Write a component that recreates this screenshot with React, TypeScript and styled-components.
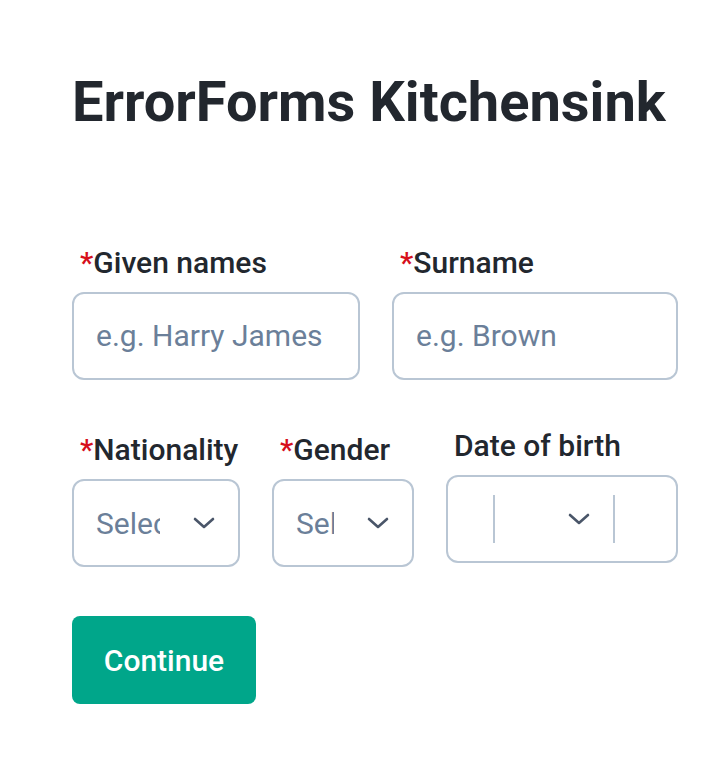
import * as React from 'react';
import styled, { createGlobalStyle } from 'styled-components';

const GlobalStyle = createGlobalStyle`
    body {
        margin: 0;
        background: #ffffff;
        font-family: Roboto, "Liberation Sans", Arial, sans-serif;
    }
`;

const Page = styled.div`
    padding: 69px 40px 40px 72px;
`;

const Title = styled.h1`
    margin: 0 0 107px 0;
    font-size: 56px;
    line-height: 67px;
    font-weight: 700;
    color: #22272e;
`;

const Form = styled.form`
    display: flex;
    flex-direction: column;
    gap: 50px;
    width: 606px;
`;

const Row = styled.div`
    display: flex;
    align-items: flex-start;
    gap: 32px;
`;

const Field: any = styled.div`
    display: flex;
    flex-direction: column;
    width: ${(props: any) => props.width}px;
`;

const Label: any = styled.label`
    display: block;
    padding: ${(props: any) => props.required ? '4px' : '0'} 0 0 8px;
    margin-bottom: 14px;
    font-size: 30px;
    line-height: 31px;
    font-weight: 500;
    color: #22272e;
    white-space: nowrap;
`;

const Star = styled.span`
    color: #d60f1c;
`;

const Box = styled.div`
    box-sizing: border-box;
    height: 88px;
    border: 2px solid #b9c6d4;
    border-radius: 12px;
    background: #fff;
    display: flex;
    align-items: center;
`;

const TextInput = styled.input`
    box-sizing: border-box;
    width: 100%;
    height: 88px;
    padding: 0 22px 2px;
    border: 2px solid #b9c6d4;
    border-radius: 12px;
    font-family: inherit;
    font-size: 30px;
    color: #22272e;
    outline: none;
    &::placeholder {
        color: #6b7f99;
    }
`;

const SelectBox = styled(Box)`
    padding: 0 12px 0 22px;
`;

const SelectValue = styled.span`
    flex: 1;
    min-width: 0;
    overflow: hidden;
    white-space: nowrap;
    font-size: 30px;
    color: #6b7f99;
`;

const Indicator: any = styled.span`
    display: flex;
    align-items: center;
    justify-content: center;
    width: 44px;
    margin-left: ${(props: any) => props.spaced ? '22px' : '0'};
`;

const DateBox = styled(Box)`
    align-items: stretch;
`;

const DatePart: any = styled.div`
    box-sizing: border-box;
    display: flex;
    align-items: center;
    justify-content: flex-end;
    width: ${(props: any) => props.width}px;
    padding-right: ${(props: any) => props.pad || 0}px;
`;

const Divider = styled.span`
    align-self: center;
    width: 2px;
    height: 48px;
    background: #b9c6d4;
`;

const Button = styled.button`
    align-self: flex-start;
    margin-top: -1px;
    width: 184px;
    height: 88px;
    border: none;
    border-radius: 8px;
    background: #00a68a;
    color: #ffffff;
    font-family: inherit;
    font-size: 30px;
    font-weight: 500;
    cursor: pointer;
`;

const Chevron = () => (
    <svg width="22" height="12" viewBox="0 0 22 12" fill="none">
        <path d="M2 2l9 8 9-8" stroke="#4a5669" strokeWidth="2.6" strokeLinecap="round" strokeLinejoin="round" />
    </svg>
);

const RequiredLabel = ({ children, required }: { children: React.ReactNode; required?: boolean }) => (
    <Label required={required}>
        {required && <Star>*</Star>}
        {children}
    </Label>
);

const SelectField = ({ label, width }: { label: string; width: number }) => (
    <Field width={width}>
        <RequiredLabel required>{label}</RequiredLabel>
        <SelectBox>
            <SelectValue>Select...</SelectValue>
            <Indicator spaced>
                <Chevron />
            </Indicator>
        </SelectBox>
    </Field>
);

export default function App() {
    return (
        <Page>
            <GlobalStyle />
            <Title>ErrorForms Kitchensink</Title>
            <Form onSubmit={(e) => e.preventDefault()}>
                <Row>
                    <Field width={288}>
                        <RequiredLabel required>Given names</RequiredLabel>
                        <TextInput placeholder="e.g. Harry James" />
                    </Field>
                    <Field width={286}>
                        <RequiredLabel required>Surname</RequiredLabel>
                        <TextInput placeholder="e.g. Brown" />
                    </Field>
                </Row>
                <Row>
                    <SelectField label="Nationality" width={168} />
                    <SelectField label="Gender" width={142} />
                    <Field width={232}>
                        <RequiredLabel>Date of birth</RequiredLabel>
                        <DateBox>
                            <DatePart width={45} />
                            <Divider />
                            <DatePart width={118} pad={12}>
                                <Indicator>
                                    <Chevron />
                                </Indicator>
                            </DatePart>
                            <Divider />
                        </DateBox>
                    </Field>
                </Row>
                <Button type="submit">Continue</Button>
            </Form>
        </Page>
    );
}
